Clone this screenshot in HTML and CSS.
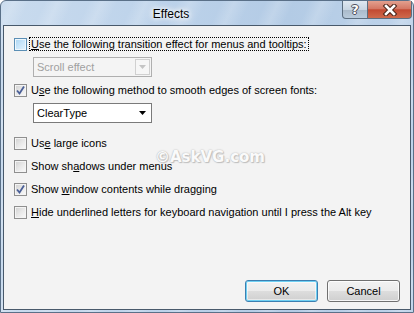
FILE: index.html
```html
<!DOCTYPE html>
<html>
<head>
<meta charset="utf-8">
<link rel="stylesheet" href="styles.css">
</head>
<body>
<div class="window">
  <div class="titlebar">
    <div class="title">Effects</div>
    <div class="caption-buttons">
      <div class="cap-btn help"><span>?</span></div>
      <div class="cap-btn close">
        <svg width="16" height="12" viewBox="0 0 16 12"><path d="M4 2 L12 10 M12 2 L4 10" stroke="#4a2418" stroke-width="4.6" fill="none" stroke-linecap="square"/><path d="M4 2 L12 10 M12 2 L4 10" stroke="#ffffff" stroke-width="2.6" fill="none" stroke-linecap="square"/></svg>
      </div>
    </div>
  </div>
  <div class="client">
    <div class="row">
      <span class="cb hover"></span>
      <span class="label focus"><u>U</u>se the following transition effect for menus and tooltips:</span>
    </div>
    <div class="combo disabled">
      <span class="combo-text">Scroll effect</span>
      <span class="combo-btn"><svg width="7" height="4" viewBox="0 0 7 4"><path d="M0 0 H7 L3.5 4 Z" fill="#c4c4c4"/></svg></span>
    </div>
    <div class="row r2">
      <span class="cb checked"><svg width="11" height="11" viewBox="0 0 11 11"><path d="M2 5.5 L4.5 8.5 L9 1.5" stroke="#4a5f97" stroke-width="1.8" fill="none"/></svg></span>
      <span class="label">U<u>s</u>e the following method to smooth edges of screen fonts:</span>
    </div>
    <div class="combo">
      <span class="combo-text">ClearType</span>
      <span class="combo-arrow"><svg width="7" height="4" viewBox="0 0 7 4"><path d="M0 0 H7 L3.5 4 Z" fill="#000"/></svg></span>
    </div>
    <div class="row r3">
      <span class="cb"></span>
      <span class="label">Us<u>e</u> large icons</span>
    </div>
    <div class="row rn">
      <span class="cb"></span>
      <span class="label">Show sh<u>a</u>dows under menus</span>
    </div>
    <div class="row rn">
      <span class="cb checked"><svg width="11" height="11" viewBox="0 0 11 11"><path d="M2 5.5 L4.5 8.5 L9 1.5" stroke="#4a5f97" stroke-width="1.8" fill="none"/></svg></span>
      <span class="label">Show <u>w</u>indow contents while dragging</span>
    </div>
    <div class="row rn">
      <span class="cb"></span>
      <span class="label"><u>H</u>ide underlined letters for keyboard navigation until I press the Alt key</span>
    </div>
    <div class="buttons">
      <div class="btn default">OK</div>
      <div class="btn">Cancel</div>
    </div>
    <div class="watermark">©AskVG.com</div>
  </div>
</div>
</body>
</html>
```
FILE: styles.css
```css
html, body {
  margin: 0;
  padding: 0;
  width: 414px;
  height: 313px;
  overflow: hidden;
}
.window {
  width: 414px;
  height: 313px;
  box-sizing: border-box;
  display: flex;
  flex-direction: column;
  background:
    repeating-linear-gradient(115deg, rgba(255,255,255,0) 0px, rgba(255,255,255,0.18) 12px, rgba(255,255,255,0) 26px, rgba(255,255,255,0) 40px),
    linear-gradient(90deg, #c9dbee 0%, #bcd2ea 40%, #b3cbe5 70%, #bed3ea 100%);
  border: 1px solid #5a7088;
  border-radius: 6px 6px 0 0;
  font-family: "Liberation Sans", Arial, sans-serif;
  font-size: 11px;
  color: #000;
}
.titlebar {
  height: 24px;
  display: flex;
  position: relative;
}
.title {
  width: 340px;
  text-align: center;
  font-size: 12px;
  line-height: 26px;
  color: #000;
  text-shadow: 0 0 4px #fff, 0 0 6px #fff, 0 0 8px #fff;
}
.caption-buttons {
  display: flex;
  margin-left: 1px;
}
.cap-btn {
  height: 18px;
  box-sizing: border-box;
  border: 1px solid #5c6e80;
  border-top: none;
  display: flex;
  align-items: center;
  justify-content: center;
}
.help {
  width: 26px;
  border-radius: 0 0 0 4px;
  background: linear-gradient(180deg, #dfe8f1 0%, #c9d6e3 50%, #a9b9c9 51%, #b9cbdc 100%);
}
.help span {
  font-family: "DejaVu Sans", sans-serif;
  font-weight: bold;
  font-size: 13px;
  color: #fff;
  line-height: 14px;
  text-shadow: 0 0 1px #333, 1px 0 0 #556, -1px 0 0 #556, 0 1px 0 #556, 0 -1px 0 #556;
}
.close {
  width: 44px;
  border-left: none;
  border-radius: 0 0 4px 0;
  background: linear-gradient(180deg, #e3a08f 0%, #d47865 45%, #c24a32 52%, #cf6a4c 100%);
}
.client {
  flex: 1;
  margin: 0 2px 2px 2px;
  border: 1px solid #48596b;
  background: #f3f3f3;
  display: flex;
  flex-direction: column;
  padding-top: 10px;
  position: relative;
}
.row {
  display: flex;
  align-items: center;
  height: 16px;
  padding-left: 10px;
}
.r2 { margin-top: 5px; }
.r3 { margin-top: 12px; }
.rn { margin-top: 7px; }
.cb {
  width: 13px;
  height: 13px;
  box-sizing: border-box;
  border: 1px solid #8f8f8f;
  background: linear-gradient(135deg, #d0d0d0 0%, #e8e8e8 50%, #fbfbfb 100%);
  box-shadow: inset 0 0 0 1px #f4f4f4;
  display: flex;
  align-items: center;
  justify-content: center;
  flex: none;
}
.cb.hover {
  border-color: #5b8fb5;
  background: linear-gradient(135deg, #a9d4f2 0%, #c9e6fa 50%, #e4f4fe 100%);
  box-shadow: inset 0 0 0 1px #eef7fd;
}
.cb.checked svg { display: block; }
.label {
  margin-left: 2px;
  padding: 0 1px;
  line-height: 12px;
  border: 1px solid transparent;
  white-space: nowrap;
}
.label.focus {
  border: 1px dotted #000;
}
.combo {
  margin: 5px 0 0 29px;
  width: 119px;
  height: 20px;
  box-sizing: border-box;
  border: 1px solid #7a7a7a;
  background: #fff;
  display: flex;
  align-items: center;
}
.combo-text {
  flex: 1;
  padding-left: 3px;
}
.combo-arrow {
  width: 17px;
  display: flex;
  justify-content: center;
}
.combo.disabled {
  border-color: #afafaf;
  background: #f4f4f4;
  color: #a0a0a0;
}
.combo-btn {
  width: 15px;
  height: 16px;
  margin-right: 1px;
  box-sizing: border-box;
  border: 1px solid #d0d0d0;
  background: #f6f6f6;
  display: flex;
  align-items: center;
  justify-content: center;
}
.buttons {
  margin-top: auto;
  margin-bottom: 7px;
  display: flex;
  justify-content: flex-end;
  gap: 9px;
  padding-right: 10px;
}
.btn {
  width: 73px;
  height: 22px;
  box-sizing: border-box;
  border: 1px solid #707070;
  border-radius: 3px;
  background: linear-gradient(180deg, #f2f2f2 0%, #ebebeb 50%, #dddddd 51%, #cfcfcf 100%);
  box-shadow: inset 0 0 0 1px rgba(255,255,255,0.8);
  display: flex;
  align-items: center;
  justify-content: center;
  font-size: 11px;
}
.btn.default {
  border-color: #3c7fb1;
  box-shadow: inset 0 0 0 1px #6fd0f3, inset 0 0 0 2px rgba(255,255,255,0.5);
}
.watermark {
  position: absolute;
  left: 151px;
  top: 122px;
  font-family: "DejaVu Sans", sans-serif;
  font-weight: bold;
  font-size: 15px;
  color: rgba(255,255,255,0.95);
  text-shadow: 0 0 1px #bbb, 0 0 2px #c8c8c8, 1px 1px 1px #bdbdbd;
  pointer-events: none;
}
```
